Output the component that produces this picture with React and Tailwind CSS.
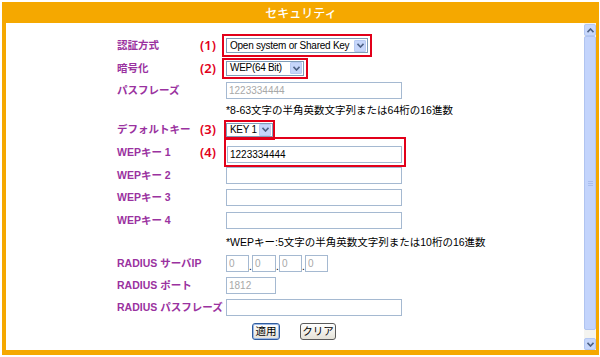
import React from 'react';

const JP = "font-['Noto_Sans_CJK_JP',sans-serif]";
const AR = "font-['Liberation_Sans','Noto_Sans_CJK_JP',sans-serif]";

const Chevron = ({ up }) => (
  <svg width="7" height="5" viewBox="0 0 7 5">
    <path d={up ? 'M0.5 4.2 L3.5 1 L6.5 4.2' : 'M0.5 0.8 L3.5 4 L6.5 0.8'} stroke="#4d6185" strokeWidth="1.6" fill="none" />
  </svg>
);

const Select = ({ value, className, textClass }) => (
  <div className={`flex items-center justify-between border border-[#7f9db9] bg-white pl-[3px] pr-[1px] ${className}`}>
    <span className={`${AR} whitespace-nowrap text-[10px] leading-none text-black ${textClass || ''}`}>{value}</span>
    <div className="flex h-[12px] w-[12px] shrink-0 items-center justify-center rounded-[1px] border border-[#b8cbf3] bg-[#c6d6fb]">
      <Chevron />
    </div>
  </div>
);

const Input = ({ value = '', dark, className = 'w-[176px]' }) => (
  <input
    readOnly
    value={value}
    className={`${AR} h-[17px] border border-[#a5b9d1] bg-white px-[2px] text-[10px] outline-none ${dark ? 'text-black' : 'text-[#a8a8a8]'} ${className}`}
  />
);

const RedBox = ({ className, children }) => (
  <div className={`border-2 border-[#e2001a] ${className}`}>{children}</div>
);

const Row = ({ label, num, className, children }) => (
  <div className={`flex items-center ${className}`}>
    <div className={`${AR} w-[83px] whitespace-nowrap text-[10.5px] font-bold leading-none text-[#9a32a0]`}>{label}</div>
    <div className="w-[22px] font-['Noto_Sans',sans-serif] text-[13px] font-semibold leading-none text-[#e2001a]">{num}</div>
    {children}
  </div>
);

const Note = ({ children, className }) => (
  <div className={`flex items-center pl-[109px] ${className}`}>
    <span className={`${AR} whitespace-nowrap text-[10.5px] leading-none text-black`}>{children}</span>
  </div>
);

const Button = ({ label, primary, className }) => (
  <button
    className={`${JP} flex h-[17px] items-center justify-center rounded-[3px] border bg-gradient-to-b from-white to-[#e4e2d8] text-[10.5px] leading-none text-black ${primary ? 'border-[#2f5c9e] shadow-[inset_0_0_0_1px_#9bb8e6]' : 'border-[#5a5a5a]'} ${className}`}
  >
    {label}
  </button>
);

const Scrollbar = () => (
  <div className="flex w-[12px] flex-col bg-[#f4f4f0] pt-[1px]">
    <div className="flex h-[12px] items-center justify-center rounded-[2px] border border-[#b4c8f3] bg-[#c7d7fb]">
      <Chevron up />
    </div>
    <div className="flex h-[294px] items-center justify-center rounded-[2px] border border-[#b0c4f0] bg-[#c3d4fc]">
      <div className="flex flex-col gap-[1px]">
        <div className="h-[1px] w-[5px] bg-[#a8bdee]" />
        <div className="h-[1px] w-[5px] bg-[#a8bdee]" />
        <div className="h-[1px] w-[5px] bg-[#a8bdee]" />
      </div>
    </div>
    <div className="flex-1" />
    <div className="flex h-[12px] items-center justify-center rounded-[2px] border border-[#b4c8f3] bg-[#c7d7fb]">
      <Chevron />
    </div>
  </div>
);

export default function App() {
  return (
    <div className="h-[357px] w-[600px] bg-white">
      <div className="ml-[2px] mt-[2px] flex h-[353px] w-[597px] flex-col bg-[#f5a800] pb-[5px] pl-[4px] pr-[3px]">
        <div className={`${JP} flex h-[21px] items-center justify-center text-[12px] font-medium leading-none text-white`}>
          セキュリティ
        </div>
        <div className="flex flex-1 bg-white">
          <div className="flex flex-1 flex-col pl-[111px] pt-[11px]">
            <Row label="認証方式" num="(1)" className="h-[23px]">
              <RedBox className="px-[2px] py-[2px]">
                <Select value="Open system or Shared Key" className="h-[15px] w-[142px]" textClass="tracking-[-0.25px]" />
              </RedBox>
            </Row>
            <Row label="暗号化" num="(2)" className="h-[22px]">
              <RedBox className="px-[2px] py-[1px]">
                <Select value="WEP(64 Bit)" className="h-[15px] w-[78px]" textClass="tracking-[-0.3px]" />
              </RedBox>
            </Row>
            <Row label="パスフレーズ" className="h-[22px]">
              <Input value="1223334444" className="ml-[4px] w-[176px]" />
            </Row>
            <Note className="h-[18px]">*8-63文字の半角英数文字列または64桁の16進数</Note>
            <Row label="デフォルトキー" num="(3)" className="h-[21px]">
              <RedBox className="ml-[2px] py-[1px]">
                <Select value="KEY 1" className="h-[14px] w-[47px]" textClass="tracking-[-0.3px]" />
              </RedBox>
            </Row>
            <Row label="WEPキー 1" num="(4)" className="h-[24px]">
              <RedBox className="ml-[2px] py-[1px] pl-[1px] pr-[2px]">
                <Input value="1223334444" dark className="w-[175px]" />
              </RedBox>
            </Row>
            <Row label="WEPキー 2" className="h-[22px]">
              <Input className="ml-[4px] w-[176px]" />
            </Row>
            <Row label="WEPキー 3" className="h-[23px]">
              <Input className="ml-[4px] w-[176px]" />
            </Row>
            <Row label="WEPキー 4" className="h-[22px]">
              <Input className="ml-[4px] w-[176px]" />
            </Row>
            <Note className="h-[22px]">*WEPキー:5文字の半角英数文字列または10桁の16進数</Note>
            <Row label="RADIUS サーバIP" className="h-[21px]">
              <div className="ml-[4px] flex items-end">
                <Input value="0" className="w-[23px]" />
                <span className={`${AR} w-[3px] text-[10px] leading-[11px]`}>.</span>
                <Input value="0" className="w-[24px]" />
                <span className={`${AR} w-[3px] text-[10px] leading-[11px]`}>.</span>
                <Input value="0" className="w-[23px]" />
                <span className={`${AR} w-[3px] text-[10px] leading-[11px]`}>.</span>
                <Input value="0" className="w-[23px]" />
              </div>
            </Row>
            <Row label="RADIUS ポート" className="h-[22px]">
              <Input value="1812" className="ml-[4px] w-[50px]" />
            </Row>
            <Row label="RADIUS パスフレーズ" className="h-[23px]">
              <Input className="ml-[4px] w-[176px]" />
            </Row>
            <div className="flex h-[24px] items-center pl-[135px]">
              <Button label="適用" primary className="w-[28px]" />
              <Button label="クリア" className="ml-[20px] w-[36px]" />
            </div>
          </div>
          <Scrollbar />
        </div>
      </div>
    </div>
  );
}
